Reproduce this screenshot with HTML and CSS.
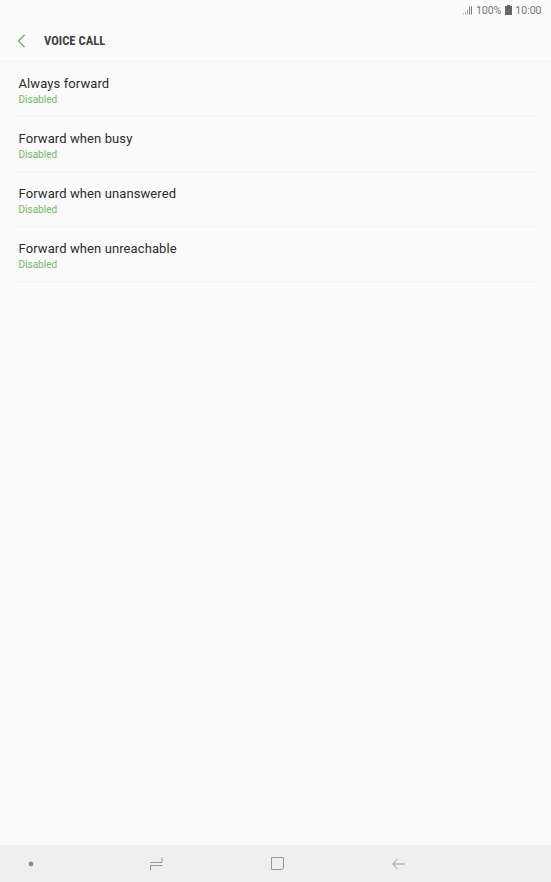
FILE: index.html
```html
<!DOCTYPE html>
<html lang="en">
<head>
<meta charset="utf-8">
<title>Voice call</title>
<link rel="stylesheet" href="styles.css">
</head>
<body>
<div class="screen">
  <div class="status">
    <svg class="signal" width="10" height="9" viewBox="0 0 10 9"><path d="M0.5 8.5v-1M2.5 8.5v-2.5M4.5 8.5v-4.5" stroke="#aaa" stroke-width="1" fill="none"/><path d="M6.5 8.5v-8M8.5 8.5v-8" stroke="#777" stroke-width="1" fill="none"/></svg>
    <span class="pct">100%</span>
    <svg class="battery" width="7" height="10" viewBox="0 0 7 10"><path d="M2 0h3v1h2v9H0V1h2z" fill="#666"/></svg>
    <span class="time">10:00</span>
  </div>
  <header class="bar">
    <svg class="back" width="9" height="14" viewBox="0 0 9 14"><path d="M7.5 1L1.5 7l6 6" stroke="#6cae5e" stroke-width="1.3" fill="none"/></svg>
    <h1 class="title">VOICE CALL</h1>
  </header>
  <main class="list">
    <div class="item"><div class="name">Always forward</div><div class="sub">Disabled</div></div>
    <div class="item"><div class="name">Forward when busy</div><div class="sub">Disabled</div></div>
    <div class="item"><div class="name">Forward when unanswered</div><div class="sub">Disabled</div></div>
    <div class="item"><div class="name">Forward when unreachable</div><div class="sub">Disabled</div></div>
  </main>
  <nav class="nav">
    <svg class="n-dot" width="6" height="6" viewBox="0 0 6 6"><circle cx="3" cy="3" r="2.4" fill="#8a8a8a"/></svg>
    <svg class="n-recent" width="13" height="14" viewBox="0 0 13 14"><path d="M0.5 13.5V8.5H12.5M0.5 5.5H12V0.5" stroke="#999" stroke-width="1" fill="none"/></svg>
    <svg class="n-home" width="13" height="13" viewBox="0 0 13 13"><path d="M12.5 10V0.5H0.5V12.5H10Q12.5 12.5 12.5 10" stroke="#999" stroke-width="1" fill="none"/></svg>
    <svg class="n-back" width="13" height="12" viewBox="0 0 13 12"><path d="M5.6 0.7L0.8 6L5.6 11.3M0.8 6H13" stroke="#999" stroke-width="1" fill="none"/></svg>
  </nav>
</div>
</body>
</html>
```
FILE: styles.css
```css
* { box-sizing: border-box; }
html, body { margin: 0; padding: 0; }
body { font-family: Roboto, "Liberation Sans", sans-serif; background: #fafafa; }
.screen { width: 551px; height: 882px; display: flex; flex-direction: column; background: #fafafa; overflow: hidden; }
.status { height: 20px; display: flex; align-items: center; justify-content: flex-end; padding-right: 9.5px; font-size: 10.5px; color: #757575; }
.signal { margin-right: 3px; }
.battery { margin: 0 3px 0 4px; }
.bar { height: 42px; display: flex; align-items: center; padding-left: 17px; border-bottom: 1px solid #f5f5f5; }
.back { flex: none; }
.title { margin: 0 0 0 18px; font-family: "Roboto Condensed", Roboto, sans-serif; font-size: 12.6px; font-weight: 700; color: #424242; }
.list { flex: 1; padding: 0 15px; }
.item { height: 55px; padding: 13px 0 0 3.5px; border-bottom: 1px solid #f5f5f5; }
.name { font-size: 13px; line-height: 17px; letter-spacing: 0.1px; color: #2b2b2b; }
.sub { font-size: 10px; line-height: 12px; margin-top: 2px; color: #74b869; }
.nav { height: 37px; background: #efefef; display: flex; align-items: center; }
.n-dot { margin-left: 28px; }
.n-recent { margin-left: 116px; }
.n-home { margin-left: 108px; }
.n-back { margin-left: 108px; }
```
